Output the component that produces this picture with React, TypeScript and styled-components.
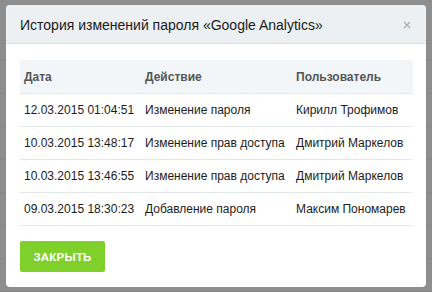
import { createGlobalStyle, styled } from "styled-components";

const GlobalStyle = createGlobalStyle`
  html, body {
    margin: 0;
    padding: 0;
  }
  body {
    font-family: "Liberation Sans", Arial, sans-serif;
    background: #8d8d8d;
  }
`;

const Backdrop = styled.div`
  width: 432px;
  height: 292px;
  box-sizing: border-box;
  padding: 5px 6px 5px 6px;
  background-color: #8e8e8e;
  background-image: repeating-linear-gradient(
    to bottom,
    transparent 0,
    transparent 32px,
    #858585 32px,
    #858585 33px
  );
  background-position: 0 28px;
`;

const Modal = styled.section`
  width: 420px;
  height: 282px;
  background: #fff;
  border-radius: 4px;
  overflow: hidden;
  display: flex;
  flex-direction: column;
`;

const Header = styled.header`
  height: 40px;
  box-sizing: border-box;
  padding: 0 14px 0 14px;
  display: flex;
  align-items: center;
  justify-content: space-between;
  background: #ecf0f2;
  border-bottom: 1px solid #d6dee1;
`;

const Title = styled.h2`
  margin: 0;
  font-size: 14px;
  font-weight: 400;
  color: #1a1a1a;
  padding-top: 1px;
`;

const Close = styled.button`
  border: 0;
  background: none;
  padding: 0;
  width: 10px;
  height: 10px;
  display: flex;
  align-items: center;
  justify-content: center;
  margin-top: 2px;
`;

const Body = styled.div`
  padding: 15px 13px 15px 14px;
  display: flex;
  flex-direction: column;
  align-items: flex-start;
`;

const Table = styled.table`
  width: 393px;
  margin-top: 1px;
  border-collapse: collapse;
  font-size: 12px;
  color: #1c1c1c;
`;

const HeadCell = styled.th`
  background: #f3f6f8;
  height: 33px;
  padding: 0 0 0 4px;
  text-align: left;
  font-weight: 700;
  color: #555;
  border-bottom: 1px solid #e3e8ea;
`;

const Cell = styled.td`
  height: 32px;
  padding: 0 0 0 4px;
  border-bottom: 1px solid #e3e8ea;
  white-space: nowrap;
`;

const CloseButton = styled.button`
  margin-top: 15px;
  width: 85px;
  height: 31px;
  border: 0;
  border-radius: 2px;
  background: #80d02c;
  color: #fff;
  font-family: "Liberation Sans", Arial, sans-serif;
  font-weight: 700;
  font-size: 11.5px;
  letter-spacing: 0.2px;
`;

const rows = [
  ["12.03.2015 01:04:51", "Изменение пароля", "Кирилл Трофимов"],
  ["10.03.2015 13:48:17", "Изменение прав доступа", "Дмитрий Маркелов"],
  ["10.03.2015 13:46:55", "Изменение прав доступа", "Дмитрий Маркелов"],
  ["09.03.2015 18:30:23", "Добавление пароля", "Максим Пономарев"],
];

export default function App() {
  return (
    <>
      <GlobalStyle />
      <Backdrop>
        <Modal>
          <Header>
            <Title>История изменений пароля «Google Analytics»</Title>
            <Close aria-label="Закрыть">
              <svg width="8" height="8" viewBox="0 0 8 8">
                <path d="M1 1L7 7M7 1L1 7" stroke="#a9adb0" strokeWidth="1.2" />
              </svg>
            </Close>
          </Header>
          <Body>
            <Table>
              <colgroup>
                <col style={{ width: 121 }} />
                <col style={{ width: 151 }} />
                <col />
              </colgroup>
              <thead>
                <tr>
                  <HeadCell>Дата</HeadCell>
                  <HeadCell>Действие</HeadCell>
                  <HeadCell>Пользователь</HeadCell>
                </tr>
              </thead>
              <tbody>
                {rows.map((r, i) => (
                  <tr key={i}>
                    {r.map((c, j) => (
                      <Cell key={j}>{c}</Cell>
                    ))}
                  </tr>
                ))}
              </tbody>
            </Table>
            <CloseButton>ЗАКРЫТЬ</CloseButton>
          </Body>
        </Modal>
      </Backdrop>
    </>
  );
}
